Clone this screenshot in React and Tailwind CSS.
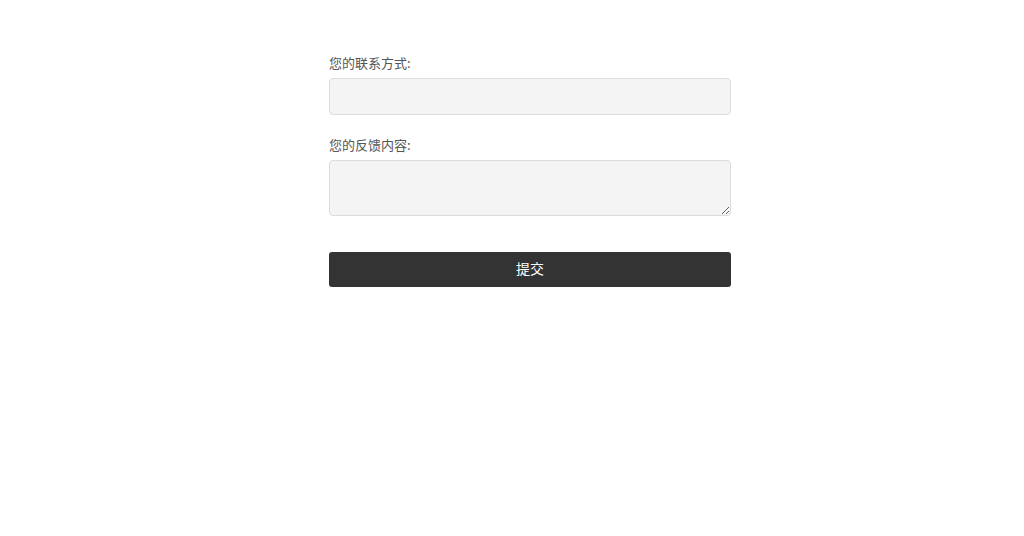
export default function App() {
  return (
    <div className="min-h-[536px] bg-white font-['Noto_Sans_CJK_SC','Noto_Sans',sans-serif]">
      <form className="ml-[329px] w-[402px] pt-[53px]" onSubmit={(e) => e.preventDefault()}>
        <label className="block text-[13px] leading-5 text-[#555] mb-[5px]">您的联系方式:</label>
        <input
          type="text"
          className="block w-full h-[37px] rounded-[4px] border border-[#dcdcdc] bg-[#f4f4f4] px-2 text-sm outline-none"
        />

        <label className="block text-[13px] leading-5 text-[#555] mt-5 mb-[5px]">您的反馈内容:</label>
        <textarea className="block w-full h-[56px] rounded-[4px] border border-[#dcdcdc] bg-[#f4f4f4] px-2 py-1 text-sm outline-none" />

        <button
          type="submit"
          className="mt-9 block w-full h-[35px] rounded-[3px] bg-[#333] pb-[3px] text-sm text-white"
        >
          提交
        </button>
      </form>
    </div>
  );
}
